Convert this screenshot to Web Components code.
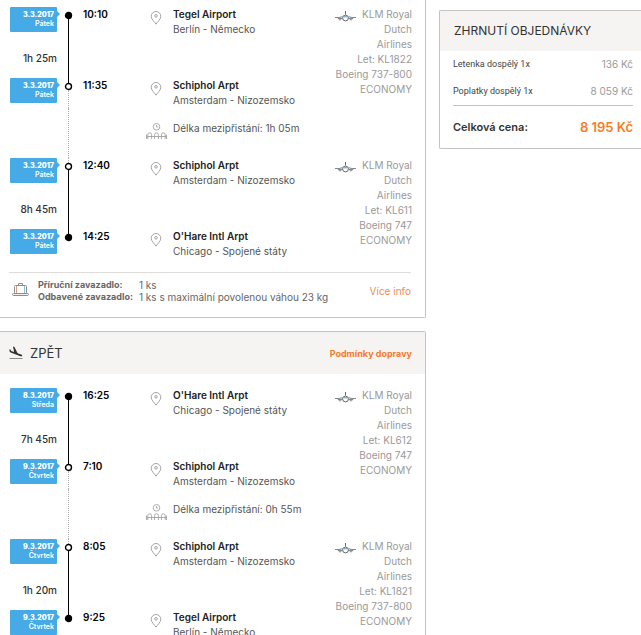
<!DOCTYPE html>
<html lang="cs">
<head>
<meta charset="utf-8">
<meta name="viewport" content="width=device-width, initial-scale=1">
<title>Letenky</title>
<style>
  body {
    margin: 0;
    background: #fff;
    color: #333;
    font: 10px/15px Inter, "Noto Sans", sans-serif;
  }
</style>
</head>
<body>
<booking-page>
  <trip-card>
    <flight-segment duration="1h 25m" airline="KLM Royal Dutch Airlines" flight="KL1822" plane="Boeing 737-800"
      from="3.3.2017|Pátek|10:10|Tegel Airport|Berlín - Německo"
      to="3.3.2017|Pátek|11:35|Schiphol Arpt|Amsterdam - Nizozemsko" start></flight-segment>
    <layover-row>Délka mezipřistání: 1h 05m</layover-row>
    <flight-segment duration="8h 45m" airline="KLM Royal Dutch Airlines" flight="KL611" plane="Boeing 747"
      from="3.3.2017|Pátek|12:40|Schiphol Arpt|Amsterdam - Nizozemsko"
      to="3.3.2017|Pátek|14:25|O'Hare Intl Arpt|Chicago - Spojené státy" end></flight-segment>
    <baggage-info slot="footer"></baggage-info>
  </trip-card>

  <trip-card heading="ZPĚT">
    <flight-segment duration="7h 45m" airline="KLM Royal Dutch Airlines" flight="KL612" plane="Boeing 747"
      from="8.3.2017|Středa|16:25|O'Hare Intl Arpt|Chicago - Spojené státy"
      to="9.3.2017|Čtvrtek|7:10|Schiphol Arpt|Amsterdam - Nizozemsko" start></flight-segment>
    <layover-row>Délka mezipřistání: 0h 55m</layover-row>
    <flight-segment duration="1h 20m" airline="KLM Royal Dutch Airlines" flight="KL1821" plane="Boeing 737-800"
      from="9.3.2017|Čtvrtek|8:05|Schiphol Arpt|Amsterdam - Nizozemsko"
      to="9.3.2017|Čtvrtek|9:25|Tegel Airport|Berlín - Německo" end></flight-segment>
  </trip-card>

  <order-summary slot="aside"></order-summary>
</booking-page>

<script>
const ICONS = {
  pin: {
    size: [12, 14],
    svg: `<g fill="none" stroke="#a5a2a2"><path d="M6 13.2C4.8 11 1.2 8.4 1.2 5.3a4.8 4.8 0 0 1 9.6 0C10.8 8.4 7.2 11 6 13.2z"/><circle cx="6" cy="4.8" r="1.3"/></g>`
  },
  waiting: {
    size: [21, 16],
    svg: `<g fill="none" stroke="#a5a2a2" stroke-width="0.9"><circle cx="10.500" cy="3.800" r="3.300"/><path d="M10.500 2v2h1.600"/>
      <path d="M0 13.500h21M.5 11.500V16M20.500 11.500V16"/>
      <path d="M1.800 16v-4.300a1.900 1.900 0 0 1 3.800 0V16M8.600 16v-4.300a1.900 1.900 0 0 1 3.800 0V16M15.400 16v-4.300a1.900 1.900 0 0 1 3.800 0V16"/></g>`
  },
  plane: {
    size: [21, 12],
    svg: `<g fill="none" stroke="#85898c"><path d="M10.500 0v3.500" stroke="#62676b"/><circle cx="10.500" cy="7" r="2.900" stroke="#62676b"/>
      <path d="M0 6.500h4l3.500-.8M21 6.500h-4l-3.500-.8M2.800 7.500h4.500M18.200 7.500h-4.500"/>
      <circle cx="5" cy="8" r="1"/><circle cx="16" cy="8" r="1"/><path d="M9 5.800h3" stroke="#4c98c6"/></g>`
  },
  suitcase: {
    size: [17, 15],
    svg: `<g fill="none" stroke="#918c8c"><rect x="2.500" y="3.500" width="12" height="8" rx="1"/><path d="M6.500 3.500v-2h4v2"/>
      <path d="M4.500 4v7" stroke="#d39a8e"/><path d="M12.500 4v7" stroke="#8fbdd0"/><rect x=".5" y="11.500" width="16" height="2" rx="1" fill="#eee"/></g>`
  },
  landing: {
    size: [14, 14],
    svg: `<path fill="#333" d="M.4 3.200l1 .2.900 1.700 2.800 1L4 .6l1.500.4 3.100 6.200 3.500 1.300c1 .4 1.300 1 1.100 1.500-.2.400-.9.500-1.700.2L1.600 6.500.6 5.400z"/><path fill="#8b8a89" d="M.5 12h13v1H.5z"/>`
  }
};

/**
 * Line drawing picked by its name attribute
 */
class LineIcon extends HTMLElement {
  connectedCallback() {
    const { size: [w, h], svg } = ICONS[this.getAttribute('name')];
    this.attachShadow({ mode: 'open' }).innerHTML = `
      <style>
        :host { display: block; flex: none; }
        svg { display: block; }
      </style>
      <svg width="${w}" height="${h}" viewBox="0 0 ${w} ${h}" aria-hidden="true">${svg}</svg>
    `;
  }
}

/**
 * Two column page: trips on the left, order summary on the right
 */
class BookingPage extends HTMLElement {
  connectedCallback() {
    this.attachShadow({ mode: 'open' }).innerHTML = `
      <style>
        :host {
          display: grid;
          grid-template-columns: 426fr 202fr;
          gap: 13px;
          height: 100vh;
          overflow: auto;
          scrollbar-width: none;
        }
        main { display: flex; flex-direction: column; gap: 13px; min-width: 0; }
        aside { padding-top: 10px; min-width: 0; }
      </style>
      <main><slot></slot></main>
      <aside><slot name="aside"></slot></aside>
    `;
  }
}

/**
 * Card with one direction of the journey
 */
class TripCard extends HTMLElement {
  connectedCallback() {
    const heading = this.getAttribute('heading');
    this.attachShadow({ mode: 'open' }).innerHTML = `
      <style>
        :host {
          display: block;
          border: 1px solid #c4c3bf;
          border-left: 0;
          border-radius: 0 2px 2px 0;
        }
        :host(:not([heading])) { border-top: 0; border-top-right-radius: 0; }
        header {
          display: flex;
          align-items: center;
          gap: 7px;
          height: 42px;
          padding: 0 13px 0 9px;
          background: #f5f4f2;
        }
        h2 { flex: 1; margin: 0; font-size: 13px; font-weight: 400; }
        a { color: #f47b29; font-size: 9px; font-weight: 700; text-decoration: none; }
        .body { padding: 7px 13px 13px 10px; }
        header + .body { padding-top: 14px; }
      </style>
      ${heading ? `
        <header>
          <line-icon name="landing"></line-icon>
          <h2>${heading}</h2>
          <a href="#podminky">Podmínky dopravy</a>
        </header>` : ''}
      <div class="body"><slot></slot></div>
      <slot name="footer"></slot>
    `;
  }
}

// Columns shared by segments and layovers: date, rail, time, icon, place, carrier
const COLUMNS = `
  :host {
    display: grid;
    grid-template-columns: 47px 23px 59px 34px 1fr 77px;
  }
  .rail { grid-column: 2; display: flex; flex-direction: column; align-items: center; }
  .dots { border-left: 1px dotted #b0aeaa; }
  .icon { display: flex; justify-content: center; align-items: flex-start; }
`;

/**
 * One flight between two airports
 */
class FlightSegment extends HTMLElement {
  connectedCallback() {
    this.attachShadow({ mode: 'open' }).innerHTML = `
      <style>
        ${COLUMNS}
        :host { grid-template-rows: 71px 30px; }
        .date {
          position: relative;
          grid-column: 1;
          align-self: start;
          box-sizing: border-box;
          height: 25px;
          padding: 3px 3px 0 0;
          border-radius: 1px;
          background: #46aae6;
          color: #fff;
          font-size: 7px;
          font-weight: 600;
          line-height: 9px;
          text-align: right;
        }
        .date::after {
          content: "";
          position: absolute;
          left: 100%;
          top: 4px;
          border: 3px solid transparent;
          border-left-color: #46aae6;
          border-right: 0;
        }
        .date b { display: block; }
        .first { grid-row: 1; }
        .second { grid-row: 2; }
        .duration { grid-area: 1 / 1; align-self: end; padding-bottom: 12px; font-weight: 500; text-align: right; }
        .rail { grid-row: 1 / 3; }
        .lead { height: 5px; }
        .tail { flex: 1; }
        .dot { display: block; width: 7px; height: 7px; overflow: visible; }
        .dot circle { fill: #fff; stroke: #000; stroke-width: 1.4; }
        .dot.full circle { fill: #000; }
        .line { width: 1px; height: 64px; background: #000; }
        time { grid-column: 3; padding-left: 3px; color: #000; font-weight: 600; }
        .icon { grid-column: 4; padding-top: 4px; }
        .place { grid-column: 5; color: #555; }
        .place b { display: block; color: #222; font-weight: 600; }
        .carrier { grid-area: 1 / 6 / 3 / 7; color: #999; text-align: right; }
        .airline { display: flex; justify-content: space-between; gap: 4px; }
        .airline line-icon { padding-top: 4px; }
        .carrier div { white-space: nowrap; }
        .carrier .airline { white-space: normal; }
      </style>
      ${this.stop('from', 'first')}
      <div class="duration">${this.getAttribute('duration')}</div>
      <div class="rail">
        <i class="lead ${this.hasAttribute('start') ? '' : 'dots'}"></i>
        ${this.dot(this.hasAttribute('start'))}
        <i class="line"></i>
        ${this.dot(this.hasAttribute('end'))}
        <i class="tail ${this.hasAttribute('end') ? '' : 'dots'}"></i>
      </div>
      ${this.stop('to', 'second')}
      <div class="carrier">
        <div class="airline"><line-icon name="plane"></line-icon><span>${this.getAttribute('airline')}</span></div>
        <div>Let: ${this.getAttribute('flight')}</div>
        <div>${this.getAttribute('plane')}</div>
        <div>ECONOMY</div>
      </div>
    `;
  }

  /**
   * Rail marker, full at the ends of the journey
   * @param {boolean} full
   */
  dot(full) {
    return `<svg class="dot ${full ? 'full' : ''}" viewBox="0 0 7 7"><circle cx="3.5" cy="3.5" r="3"/></svg>`;
  }

  /**
   * Cells of one stop
   * @param {string} attr - "date|day|time|airport|city"
   * @param {string} row - Row class
   */
  stop(attr, row) {
    const [date, day, time, airport, city] = this.getAttribute(attr).split('|');
    return `
      <div class="date ${row}"><b>${date}</b>${day}</div>
      <time class="${row}">${time}</time>
      <div class="icon ${row}"><line-icon name="pin"></line-icon></div>
      <div class="place ${row}"><b>${airport}</b>${city}</div>
    `;
  }
}

/**
 * Waiting time between two segments
 */
class LayoverRow extends HTMLElement {
  connectedCallback() {
    this.attachShadow({ mode: 'open' }).innerHTML = `
      <style>
        ${COLUMNS}
        :host { height: 50px; color: #555; }
        .dots { flex: 1; }
        .icon { grid-column: 4; padding-top: 15px; }
        .text { grid-column: 5; padding-top: 13px; white-space: nowrap; }
      </style>
      <div class="rail"><i class="dots"></i></div>
      <div class="icon"><line-icon name="waiting"></line-icon></div>
      <div class="text"><slot></slot></div>
    `;
  }
}

/**
 * Baggage allowance under the segments
 */
class BaggageInfo extends HTMLElement {
  connectedCallback() {
    this.attachShadow({ mode: 'open' }).innerHTML = `
      <style>
        :host {
          display: flex;
          align-items: center;
          margin: 0 14px 0 9px;
          padding: 6px 0 14px 3px;
          border-top: 1px solid #dedcd8;
          color: #666;
          line-height: 12px;
        }
        line-icon { padding-bottom: 3px; }
        dl {
          flex: 1;
          display: grid;
          grid-template-columns: auto 1fr;
          column-gap: 6px;
          margin: 0 0 0 9px;
        }
        dt { font-size: 9px; font-weight: 700; }
        dd { margin: 0; }
        a { color: #ee8d5c; text-decoration: none; }
      </style>
      <line-icon name="suitcase"></line-icon>
      <dl>
        <dt>Příruční zavazadlo:</dt><dd>1 ks</dd>
        <dt>Odbavené zavazadlo:</dt><dd>1 ks s maximální povolenou váhou 23 kg</dd>
      </dl>
      <a href="#info">Více info</a>
    `;
  }
}

/**
 * Price breakdown
 */
class OrderSummary extends HTMLElement {
  connectedCallback() {
    this.attachShadow({ mode: 'open' }).innerHTML = `
      <style>
        :host {
          display: block;
          border: 1px solid #c4c3bf;
          border-right: 0;
          border-radius: 2px 0 0 2px;
        }
        h2 {
          margin: 0;
          padding: 0 8px 0 14px;
          background: #f5f4f2;
          font-size: 12px;
          font-weight: 400;
          line-height: 40px;
          white-space: nowrap;
        }
        dl { margin: 0; padding: 0 8px 0 13px; }
        div { display: flex; justify-content: space-between; line-height: 27px; }
        dt { font-family: Roboto, sans-serif; font-size: 9px; color: #444; }
        dd { margin: 0; color: #999; }
        .total { border-top: 1px solid #c4c3bf; line-height: 42px; }
        .total dt { font-family: inherit; font-size: 11px; font-weight: 600; color: #333; }
        .total dd { font-size: 13px; font-weight: 600; color: #f97b1f; }
      </style>
      <h2>ZHRNUTÍ OBJEDNÁVKY</h2>
      <dl>
        <div><dt>Letenka dospělý 1x</dt><dd>136 Kč</dd></div>
        <div><dt>Poplatky dospělý 1x</dt><dd>8 059 Kč</dd></div>
        <div class="total"><dt>Celková cena:</dt><dd>8 195 Kč</dd></div>
      </dl>
    `;
  }
}

customElements.define('line-icon', LineIcon);
customElements.define('booking-page', BookingPage);
customElements.define('trip-card', TripCard);
customElements.define('flight-segment', FlightSegment);
customElements.define('layover-row', LayoverRow);
customElements.define('baggage-info', BaggageInfo);
customElements.define('order-summary', OrderSummary);
</script>
</body>
</html>
